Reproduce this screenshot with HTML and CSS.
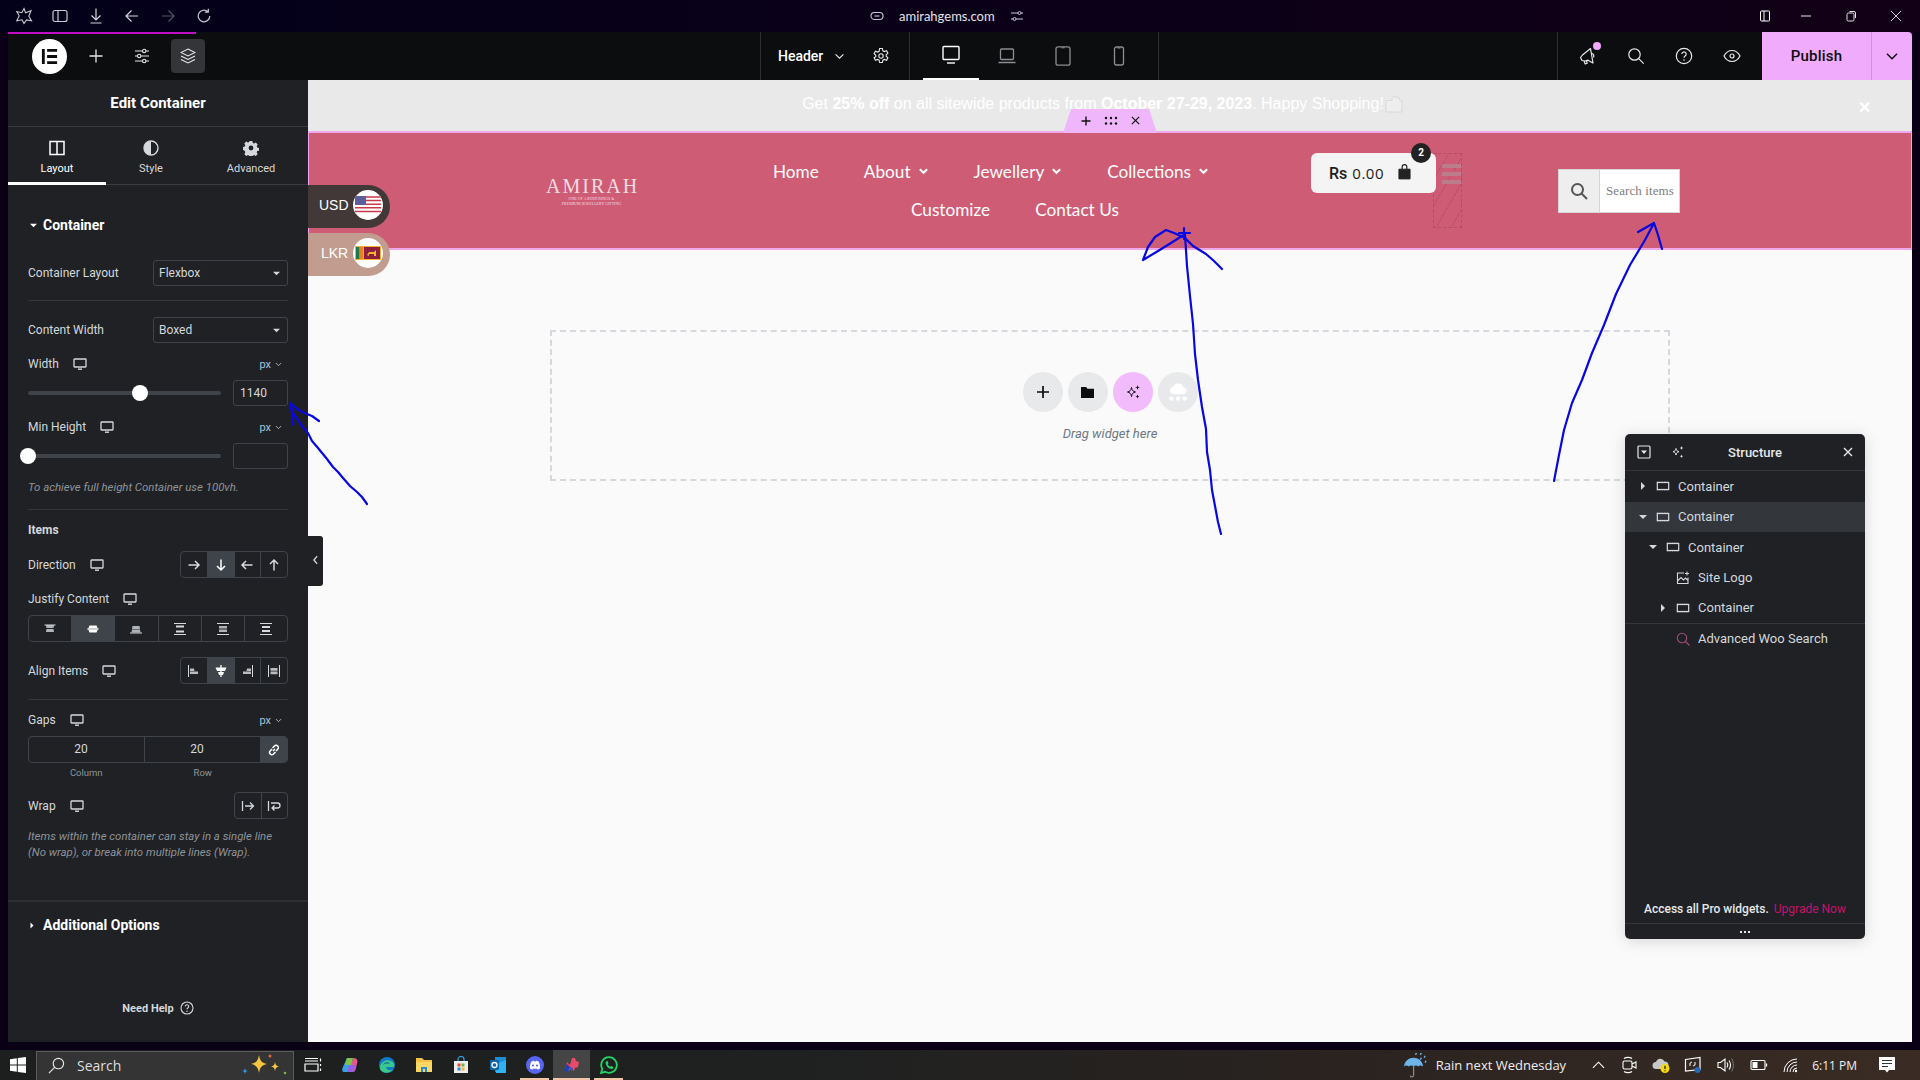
FILE: index.html
```html
<!DOCTYPE html>
<html lang="en">
<head>
  <meta charset="UTF-8" />
  <title>Elementor - Header</title>
  <link rel="stylesheet" href="styles.css">
</head>
<body>
  <svg class="sprites" width="0" height="0" aria-hidden="true">
    <symbol id="i-monitor" viewBox="0 0 14 14"><path d="M1.500 2h11a.5.5 0 0 1 .5.5v7a.5.5 0 0 1-.5.5h-11a.5.5 0 0 1-.5-.5v-7a.5.5 0 0 1 .5-.5z" fill="none" stroke="currentColor" stroke-width="1.300"/><path d="M5 12.200h4" stroke="currentColor" stroke-width="1.400"/></symbol>
    <symbol id="i-box" viewBox="0 0 16 12"><rect x="1.500" y="2" width="13" height="8" fill="none" stroke="currentColor" stroke-width="1.400"/><path d="M1 1.500h14M1 10.500h14" stroke="currentColor" stroke-dasharray="1 1" stroke-width="1"/></symbol>
    <symbol id="i-right" viewBox="0 0 8 10"><path d="M2 1l4 4-4 4z" fill="currentColor"/></symbol>
    <symbol id="i-down" viewBox="0 0 10 8"><path d="M1 2h8L5 6z" fill="currentColor"/></symbol>
    <symbol id="i-chev" viewBox="0 0 12 8"><path d="M1.500 1.500L6 6l4.500-4.500" fill="none" stroke="currentColor" stroke-width="1.300"/></symbol>
  </svg>

  <!-- browser title bar -->
  <header class="browser-bar">
    <div class="browser-left">
      <svg class="b-ico" viewBox="0 0 18 18"><path d="M9 1.500l1.600 4.200 5.400-2-2.200 5.600 2.700 4.400-5-.8L9 16.500l-2-3.700-5.200 1 2.400-5L1.800 4.500l5 1.200z" fill="none" stroke="#c9c9d2" stroke-width="1.100"/></svg>
      <svg class="b-ico" viewBox="0 0 18 18"><rect x="2" y="3.500" width="14" height="11" rx="2" fill="none" stroke="#c9c9d2" stroke-width="1.200"/><path d="M7 3.500v11" stroke="#c9c9d2" stroke-width="1.200"/></svg>
      <svg class="b-ico" viewBox="0 0 18 18"><path d="M9 1.500v11M4.500 8.500L9 13l4.500-4.500M3.500 16h11" fill="none" stroke="#d5d5dc" stroke-width="1.200"/></svg>
      <svg class="b-ico" viewBox="0 0 18 18"><path d="M15 9H3M8.500 3.500L3 9l5.500 5.500" fill="none" stroke="#d5d5dc" stroke-width="1.200"/></svg>
      <svg class="b-ico" viewBox="0 0 18 18"><path d="M3 9h12M9.500 3.500L15 9l-5.500 5.500" fill="none" stroke="#55535f" stroke-width="1.200"/></svg>
      <svg class="b-ico" viewBox="0 0 18 18"><path d="M14.800 9a5.800 5.800 0 1 1-1.900-4.300M13.300 1.800v3.400H9.900" fill="none" stroke="#c9c9d2" stroke-width="1.200"/></svg>
    </div>
    <div class="url">
      <svg class="url-ico" viewBox="0 0 14 14"><rect x="1" y="3.500" width="12" height="7" rx="3.500" fill="none" stroke="#c9c9d2" stroke-width="1.100"/><path d="M4.500 7h5" stroke="#c9c9d2" stroke-width="1.100"/></svg>
      <span>amirahgems.com</span>
      <svg class="url-ico" viewBox="0 0 14 14"><path d="M1 4h7M11 4h2M1 10h2M6 10h7" stroke="#c9c9d2" stroke-width="1.100"/><circle cx="9.500" cy="4" r="1.500" fill="none" stroke="#c9c9d2"/><circle cx="4.500" cy="10" r="1.500" fill="none" stroke="#c9c9d2"/></svg>
    </div>
    <div class="win-btns">
      <svg class="w-ico" viewBox="0 0 12 12"><rect x="1.500" y="1" width="9" height="10" rx="1" fill="none" stroke="#fff"/><path d="M5 1v10" stroke="#fff"/></svg>
      <svg class="w-ico" viewBox="0 0 12 12"><path d="M1 6h10" stroke="#e5e5e5"/></svg>
      <svg class="w-ico" viewBox="0 0 12 12"><rect x="2" y="3" width="7" height="8" rx="1.500" fill="none" stroke="#e5e5e5"/><path d="M4.500 1.500H9a1.500 1.500 0 0 1 1.500 1.500v5" fill="none" stroke="#e5e5e5"/></svg>
      <svg class="w-ico" viewBox="0 0 12 12"><path d="M1 1l10 10M11 1L1 11" stroke="#e5e5e5" stroke-width=".9"/></svg>
    </div>
    <div class="load-line"></div>
  </header>

  <div class="app">
    <!-- elementor top bar -->
    <div class="topbar">
      <div class="tb-left">
        <div class="tb-cell"><div class="el-logo"><svg viewBox="0 0 20 20" width="19" height="19"><path d="M2 2h3v16H2zM7.500 2H18v3H7.500zM7.500 8.500H18v3H7.500zM7.500 15H18v3H7.500z" fill="#0c0d0e"/></svg></div></div>
        <div class="tb-cell"><svg viewBox="0 0 16 16" width="16" height="16"><path d="M8 1.500v13M1.500 8h13" stroke="#e6e8ea" stroke-width="1.300"/></svg></div>
        <div class="tb-cell"><svg viewBox="0 0 16 16" width="16" height="16"><path d="M1 3h7.500M12 3h3M1 8h2.500M7 8h8M1 13h7.500M12 13h3" stroke="#e6e8ea" stroke-width="1.200"/><circle cx="10.200" cy="3" r="1.700" fill="none" stroke="#e6e8ea" stroke-width="1.100"/><circle cx="5.200" cy="8" r="1.700" fill="none" stroke="#e6e8ea" stroke-width="1.100"/><circle cx="10.200" cy="13" r="1.700" fill="none" stroke="#e6e8ea" stroke-width="1.100"/></svg></div>
        <div class="tb-cell"><div class="tb-active"><svg viewBox="0 0 16 16" width="16" height="16"><path d="M8 1L15 4.500 8 8 1 4.500zM1 8l7 3.500L15 8M1 11.500L8 15l7-3.500" fill="none" stroke="#e6e8ea" stroke-width="1.100"/></svg></div></div>
      </div>
      <div class="tb-doc">
        <span class="doc-name">Header</span>
        <svg class="tb-chev" viewBox="0 0 12 8"><use href="#i-chev"/></svg>
        <svg class="tb-gear" viewBox="0 0 18 18"><path d="M7.600 1.500h2.800l.5 2.300 1.500.8 2.200-.8 1.300 2.400-1.700 1.600v1.400l1.700 1.600-1.300 2.400-2.200-.8-1.500.8-.5 2.300H7.600l-.5-2.300-1.500-.8-2.200.8-1.300-2.400L3.800 9.700V8.300L2.100 6.700l1.300-2.400 2.200.8 1.500-.8z" fill="none" stroke="#e6e8ea" stroke-width="1.100"/><circle cx="9" cy="9" r="2.200" fill="none" stroke="#e6e8ea" stroke-width="1.100"/></svg>
      </div>
      <div class="tb-devices">
        <div class="device is-on"><svg viewBox="0 0 20 20" width="20" height="20"><rect x="2" y="1.500" width="16" height="13" rx="1" fill="none" stroke="#fff" stroke-width="1.400"/><path d="M6 18h8" stroke="#fff" stroke-width="1.400"/></svg></div>
        <div class="device"><svg viewBox="0 0 20 20" width="20" height="20"><rect x="3.500" y="3" width="13" height="10.500" rx="1" fill="none" stroke="#8b8e92" stroke-width="1.300"/><path d="M1.500 16.500h17" stroke="#8b8e92" stroke-width="1.500"/></svg></div>
        <div class="device"><svg viewBox="0 0 20 20" width="20" height="20"><rect x="3" y=".8" width="14" height="18.400" rx="2" fill="none" stroke="#8b8e92" stroke-width="1.300"/><path d="M8.500 1.800h3" stroke="#8b8e92"/></svg></div>
        <div class="device"><svg viewBox="0 0 20 20" width="20" height="20"><rect x="5.500" y="1" width="9" height="18" rx="2" fill="none" stroke="#8b8e92" stroke-width="1.300"/><path d="M8.500 2h3" stroke="#8b8e92"/></svg></div>
      </div>
      <div class="tb-tools">
        <span class="tool megaphone"><svg viewBox="0 0 18 18" width="18" height="18"><path d="M11.500 1.500L3.500 8 1.500 10.500l1.500 3 3 .5 3-.8L14 16zM5 14l1.200 3 2-.8L7.500 13.500M13 6.500c1.500.2 2.300 2.300 1.500 4" fill="none" stroke="#e6e8ea" stroke-width="1.200" stroke-linejoin="round"/></svg><i class="dot"></i></span>
        <span class="tool"><svg viewBox="0 0 18 18" width="18" height="18"><circle cx="7.500" cy="7.500" r="5.700" fill="none" stroke="#e6e8ea" stroke-width="1.200"/><path d="M11.700 11.700l5 5" stroke="#e6e8ea" stroke-width="1.200"/></svg></span>
        <span class="tool"><svg viewBox="0 0 18 18" width="18" height="18"><circle cx="9" cy="9" r="7.700" fill="none" stroke="#e6e8ea" stroke-width="1.200"/><path d="M6.800 7a2.200 2.200 0 1 1 3.300 2c-.8.500-1.100.8-1.100 1.800" fill="none" stroke="#e6e8ea" stroke-width="1.200"/><circle cx="9" cy="13" r=".8" fill="#e6e8ea"/></svg></span>
        <span class="tool"><svg viewBox="0 0 18 18" width="18" height="18"><path d="M1 9c2-3.800 4.800-5.500 8-5.500s6 1.700 8 5.500c-2 3.800-4.800 5.500-8 5.500S3 12.800 1 9z" fill="none" stroke="#e6e8ea" stroke-width="1.200"/><circle cx="9" cy="9" r="2" fill="none" stroke="#e6e8ea" stroke-width="1.200"/></svg></span>
      </div>
      <div class="publish">
        <span class="publish-main">Publish</span>
        <span class="publish-more"><svg viewBox="0 0 12 8" width="14" height="9"><use href="#i-chev"/></svg></span>
      </div>
    </div>

    <div class="workspace">
      <!-- settings panel -->
      <aside class="panel">
        <div class="panel-head">Edit Container</div>
        <div class="tabs">
          <div class="tab is-on">
            <svg viewBox="0 0 16 16" width="16" height="16"><rect x="1" y="1.500" width="14" height="13" fill="none" stroke="#fff" stroke-width="1.500"/><path d="M8 1.500v13" stroke="#fff" stroke-width="1.500"/></svg>
            <span>Layout</span>
          </div>
          <div class="tab tab-style">
            <svg viewBox="0 0 16 16" width="16" height="16"><circle cx="8" cy="8" r="7" fill="none" stroke="#d5d8dc" stroke-width="1.400"/><path d="M8 1a7 7 0 0 0 0 14z" fill="#d5d8dc"/></svg>
            <span>Style</span>
          </div>
          <div class="tab tab-adv">
            <svg viewBox="0 0 16 16" width="16" height="16"><path fill-rule="evenodd" d="M6.600 1h2.800l.4 1.900 1.300.6 1.700-1 1.900 2-1 1.700.5 1.300 1.800.4v2.800l-1.800.4-.5 1.300 1 1.700-1.900 2-1.700-1-1.300.6-.4 1.300H6.600l-.4-1.300-1.300-.6-1.700 1-1.900-2 1-1.700-.5-1.300L0 9.700V6.900l1.800-.4.500-1.300-1-1.700 1.900-2 1.700 1 1.300-.6zM8 5.600a2.400 2.400 0 1 0 0 4.800 2.400 2.400 0 0 0 0-4.800z" fill="#d5d8dc"/></svg>
            <span>Advanced</span>
          </div>
        </div>

        <div class="panel-body">
          <div class="sec-title"><svg class="sec-arrow" viewBox="0 0 10 8"><use href="#i-down"/></svg>Container</div>

          <div class="row row-layout"><label>Container Layout</label><div class="select">Flexbox<svg viewBox="0 0 10 8"><use href="#i-down"/></svg></div></div>
          <hr class="sep sep-b">
          <div class="row row-width"><label>Content Width</label><div class="select">Boxed<svg viewBox="0 0 10 8"><use href="#i-down"/></svg></div></div>

          <div class="ctl-head ch-width"><label>Width</label><svg class="mon" viewBox="0 0 14 14"><use href="#i-monitor"/></svg><span class="unit">px<svg viewBox="0 0 12 8"><use href="#i-chev"/></svg></span></div>
          <div class="slider-row"><div class="track"><i class="thumb thumb-w"></i></div><div class="num">1140</div></div>

          <div class="ctl-head ch-min"><label>Min Height</label><svg class="mon" viewBox="0 0 14 14"><use href="#i-monitor"/></svg><span class="unit">px<svg viewBox="0 0 12 8"><use href="#i-chev"/></svg></span></div>
          <div class="slider-row"><div class="track"><i class="thumb thumb-h"></i></div><div class="num"></div></div>
          <p class="hint hint-vh">To achieve full height Container use 100vh.</p>
          <hr class="sep sep-b">

          <div class="sub-title">Items</div>

          <div class="row row-dir">
            <div class="ctl-label"><label>Direction</label><svg class="mon" viewBox="0 0 14 14"><use href="#i-monitor"/></svg></div>
            <div class="btn-group g4">
              <span><svg viewBox="0 0 14 14"><path d="M1.500 7h10.500M8 3l4 4-4 4" fill="none" stroke="currentColor" stroke-width="1.500"/></svg></span>
              <span class="is-on"><svg viewBox="0 0 14 14"><path d="M7 1.500V12M3 8l4 4 4-4" fill="none" stroke="currentColor" stroke-width="1.500"/></svg></span>
              <span><svg viewBox="0 0 14 14"><path d="M12.500 7H2M6 3L2 7l4 4" fill="none" stroke="currentColor" stroke-width="1.500"/></svg></span>
              <span><svg viewBox="0 0 14 14"><path d="M7 12.500V2M3 6l4-4 4 4" fill="none" stroke="currentColor" stroke-width="1.500"/></svg></span>
            </div>
          </div>

          <div class="ctl-head ch-just"><label>Justify Content</label><svg class="mon" viewBox="0 0 14 14"><use href="#i-monitor"/></svg></div>
          <div class="btn-group g6">
            <span><svg viewBox="0 0 14 14"><path d="M1.500 3h11" stroke="currentColor"/><path d="M3 3h8l-.5 3h-7zM3.500 7h7l.5 3H3z" fill="currentColor" opacity=".8"/></svg></span>
            <span class="is-on"><svg viewBox="0 0 14 14"><path d="M1.500 7h11" stroke="currentColor" stroke-width="1.300"/><path d="M3.500 3.500h7L11.500 6h-9zM2.500 8h9l-1 2.500h-7z" fill="currentColor"/></svg></span>
            <span><svg viewBox="0 0 14 14"><path d="M1 11h12" stroke="currentColor"/><path d="M3.500 4h7l.5 3H3zM3 7.500h8l.5 3h-9z" fill="currentColor" opacity=".8"/></svg></span>
            <span><svg viewBox="0 0 14 14"><path d="M1 1.500h12M1 12.500h12" stroke="currentColor"/><path d="M3 3.500h8v2H3zM3 8.500h8v2H3z" fill="currentColor"/></svg></span>
            <span><svg viewBox="0 0 14 14"><path d="M1 1.500h12M1 12.500h12" stroke="currentColor"/><path d="M3 4h8v2.500H3zM3 7.500h8V10H3z" fill="currentColor" opacity=".8"/></svg></span>
            <span><svg viewBox="0 0 14 14"><path d="M1 1.500h12M1 12.500h12" stroke="currentColor"/><path d="M3 4h8v2H3zM3 8h8v2H3z" fill="currentColor"/></svg></span>
          </div>

          <div class="row row-align">
            <div class="ctl-label"><label>Align Items</label><svg class="mon" viewBox="0 0 14 14"><use href="#i-monitor"/></svg></div>
            <div class="btn-group g4">
              <span><svg viewBox="0 0 14 14"><path d="M1.500 1v12" stroke="currentColor"/><path d="M3 4.500h4l.5 2.500H3zM3 7.500h8V10H3z" fill="currentColor" opacity=".85"/></svg></span>
              <span class="is-on"><svg viewBox="0 0 14 14"><path d="M7 1v12" stroke="currentColor" stroke-width="1.300"/><path d="M1.500 3.500h11L11 7H3zM4 8h6l-1 3H5z" fill="currentColor"/></svg></span>
              <span><svg viewBox="0 0 14 14"><path d="M12.500 1v12" stroke="currentColor"/><path d="M7 4.500h4V7H6.500zM3 7.500h8V10H3z" fill="currentColor" opacity=".85"/></svg></span>
              <span><svg viewBox="0 0 14 14"><path d="M1.500 1v12M12.500 1v12" stroke="currentColor"/><path d="M3.500 4h7v2.700h-7zM3.500 7.500h7v2.700h-7z" fill="currentColor" opacity=".85"/></svg></span>
            </div>
          </div>
          <hr class="sep sep-a">

          <div class="ctl-head ch-gaps"><label>Gaps</label><svg class="mon" viewBox="0 0 14 14"><use href="#i-monitor"/></svg><span class="unit">px<svg viewBox="0 0 12 8"><use href="#i-chev"/></svg></span></div>
          <div class="gap-fields">
            <span>20</span><span>20</span>
            <i class="gap-link"><svg viewBox="0 0 14 14" width="14" height="14"><path d="M6 8l2-2M5.500 5L7.500 3a2.100 2.100 0 0 1 3.200 3.200L9 8M8.500 9l-2 2a2.100 2.100 0 0 1-3.200-3.200L5 6" fill="none" stroke="#fff" stroke-width="1.500"/></svg></i>
          </div>
          <div class="gap-labels"><span>Column</span><span>Row</span></div>

          <div class="row row-wrap">
            <div class="ctl-label"><label>Wrap</label><svg class="mon" viewBox="0 0 14 14"><use href="#i-monitor"/></svg></div>
            <div class="btn-group g2">
              <span><svg viewBox="0 0 14 14"><path d="M1.500 2v10M4 7h8.500M9 3.500L12.500 7 9 10.500" fill="none" stroke="currentColor" stroke-width="1.300"/></svg></span>
              <span><svg viewBox="0 0 14 14"><path d="M1.500 2v10M4 4h6.500a2.500 2.500 0 0 1 0 5H5M7.500 6.500L5 9l2.500 2.500" fill="none" stroke="currentColor" stroke-width="1.300"/></svg></span>
            </div>
          </div>
          <p class="hint hint-wrap">Items within the container can stay in a single line<br>(No wrap), or break into multiple lines (Wrap).</p>
        </div>

        <div class="panel-extra">
          <div class="sec-title"><svg class="sec-arrow small" viewBox="0 0 8 10"><use href="#i-right"/></svg>Additional Options</div>
        </div>
        <div class="need-help">Need Help<svg viewBox="0 0 14 14" width="14" height="14"><circle cx="7" cy="7" r="6" fill="none" stroke="#d5d8dc" stroke-width="1.100"/><path d="M5.300 5.500a1.700 1.700 0 1 1 2.500 1.500c-.6.400-.8.600-.8 1.300" fill="none" stroke="#d5d8dc" stroke-width="1.100"/><circle cx="7" cy="10.200" r=".7" fill="#d5d8dc"/></svg></div>
      </aside>

      <!-- page preview -->
      <main class="preview">
        <div class="promo">
          <p>Get <b>25% off</b> on all sitewide products from <b>October 27-29, 2023</b>. Happy Shopping!<svg class="promo-bag" viewBox="0 0 18 18" width="18" height="18"><path d="M1 5.500h6V3l2-2 2 2 2-1 2 3.500h2V17H1z" fill="#eeeeee" stroke="#d9d9d9"/></svg></p>
          <span class="promo-close">&#10005;</span>
        </div>
        <div class="handle">
          <svg viewBox="0 0 12 12" width="12" height="12"><path d="M6 1.500v9M1.500 6h9" stroke="#111" stroke-width="1.400"/></svg>
          <svg viewBox="0 0 14 12" width="14" height="12"><g fill="#111"><circle cx="2" cy="3" r="1.200"/><circle cx="7" cy="3" r="1.200"/><circle cx="12" cy="3" r="1.200"/><circle cx="2" cy="8.500" r="1.200"/><circle cx="7" cy="8.500" r="1.200"/><circle cx="12" cy="8.500" r="1.200"/></g></svg>
          <svg viewBox="0 0 12 12" width="11" height="11"><path d="M2 2l8 8M10 2l-8 8" stroke="#111" stroke-width="1.300"/></svg>
        </div>
        <div class="site-header">
          <div class="site-logo">
            <div class="logo-word">AMIRAH</div>
            <div class="logo-sub">ONE OF A KIND RINGS &amp;<br>PREMIUM JEWELLERY GIFTING</div>
          </div>
          <nav class="site-nav">
            <div class="nav-row nav-a">
              <a>Home</a>
              <a>About<svg viewBox="0 0 12 8"><path d="M2 2l4 4 4-4" fill="none" stroke="#fff" stroke-width="2.200"/></svg></a>
              <a>Jewellery<svg viewBox="0 0 12 8"><path d="M2 2l4 4 4-4" fill="none" stroke="#fff" stroke-width="2.200"/></svg></a>
              <a>Collections<svg viewBox="0 0 12 8"><path d="M2 2l4 4 4-4" fill="none" stroke="#fff" stroke-width="2.200"/></svg></a>
            </div>
            <div class="nav-row nav-b"><a>Customize</a><a>Contact Us</a></div>
          </nav>
          <div class="cart">
            <b>Rs</b><span>0.00</span>
            <svg viewBox="0 0 14 18" width="13" height="17"><path d="M1 6.500h12V17H1z" fill="#222" stroke="#222" stroke-linejoin="round"/><path d="M4.500 6.500V4a2.500 2.500 0 0 1 5 0v2.500" fill="none" stroke="#222" stroke-width="1.300"/></svg>
            <i class="cart-badge">2</i>
          </div>
          <div class="menu-stub"><i></i><i></i><i></i></div>
          <div class="site-search">
            <span class="search-ico"><svg viewBox="0 0 18 18" width="18" height="18"><circle cx="7.500" cy="7.500" r="5.500" fill="none" stroke="#555" stroke-width="2"/><path d="M11.500 11.500l5.500 5.500" stroke="#555" stroke-width="2"/></svg></span>
            <span class="search-text">Search items</span>
          </div>
        </div>

        <div class="currency">
          <div class="cur cur-usd">USD
            <span class="flag"><svg viewBox="0 0 26 18" width="26" height="18"><rect width="26" height="18" fill="#fff"/><path d="M0 1h26M0 4.600h26M0 8.200h26M0 11.800h26M0 15.400h26" stroke="#c8394a" stroke-width="1.500"/><rect width="11" height="9" fill="#5a5f9c"/></svg></span>
          </div>
          <div class="cur cur-lkr">LKR
            <span class="flag"><svg viewBox="0 0 26 14" width="26" height="14"><rect width="26" height="14" fill="#f2b233"/><rect x="1" y="1" width="3.500" height="12" fill="#1c7a4e"/><rect x="4.500" y="1" width="3.500" height="12" fill="#ef7d1a"/><rect x="9" y="1" width="16" height="12" fill="#8d1f3c"/><path d="M12 9l2-3h5l2-2v6h-2V8h-5v2z" fill="#f2b233"/></svg></span>
          </div>
        </div>

        <section class="dropzone">
          <div class="drop-btns">
            <span class="drop-btn"><svg viewBox="0 0 14 14" width="14" height="14"><path d="M7 1v12M1 7h12" stroke="#0c0d0e" stroke-width="1.700"/></svg></span>
            <span class="drop-btn"><svg viewBox="0 0 16 14" width="15" height="13"><path d="M1 1h5.500l1.500 2h7v10H1z" fill="#0c0d0e"/></svg></span>
            <span class="drop-btn is-ai"><svg viewBox="0 0 16 16" width="16" height="16"><path d="M6.500 3.500c.6 3 1.500 3.900 4 4.500-2.500.6-3.400 1.500-4 4.500-.6-3-1.500-3.900-4-4.500 2.500-.6 3.400-1.500 4-4.500z" fill="none" stroke="#0c0d0e"/><path d="M12.500 1l.6 1.900 1.900.6-1.900.6-.6 1.900-.6-1.900-1.900-.6 1.900-.6zM12.500 10.500l.6 1.400 1.400.6-1.400.6-.6 1.400-.6-1.400-1.400-.6 1.400-.6z" fill="#0c0d0e"/></svg></span>
            <span class="drop-btn"><svg viewBox="0 0 20 20" width="22" height="22"><path d="M5.500 12a3.300 3.300 0 0 1 0-6.500A5 5 0 0 1 15 6a3 3 0 0 1-.5 6z" fill="#fff"/><circle cx="4" cy="16" r="2" fill="#fff"/><circle cx="10" cy="16" r="2" fill="#fff"/><circle cx="16" cy="16" r="2" fill="#fff"/></svg></span>
          </div>
          <p>Drag widget here</p>
        </section>

        <!-- navigator -->
        <div class="structure">
          <div class="st-head">
            <svg viewBox="0 0 14 14" width="14" height="14"><rect x="1" y="1" width="12" height="12" rx="1" fill="none" stroke="#e6e8ea" stroke-width="1.200"/><path d="M4 5.500h6L7 9z" fill="#e6e8ea"/></svg>
            <svg class="st-spark" viewBox="0 0 14 14" width="14" height="14"><path d="M5 3.500c.4 2 1 2.700 3 3.200-2 .5-2.600 1.200-3 3.300-.4-2.100-1-2.800-3-3.300 2-.5 2.600-1.200 3-3.200z" fill="none" stroke="#e6e8ea"/><path d="M10.500 1l.5 1.500 1.500.5-1.500.5-.5 1.500L10 3.500 8.500 3l1.500-.5zM10.500 9.500l.5 1.200 1.200.5-1.200.5-.5 1.300-.5-1.300-1.200-.5 1.200-.5z" fill="#e6e8ea"/></svg>
            <span class="st-title">Structure</span>
            <svg class="st-close" viewBox="0 0 10 10" width="10" height="10"><path d="M1 1l8 8M9 1L1 9" stroke="#e6e8ea" stroke-width="1.400"/></svg>
          </div>
          <div class="st-row d0"><svg class="tw" viewBox="0 0 8 10"><use href="#i-right"/></svg><svg class="bx" viewBox="0 0 16 12"><use href="#i-box"/></svg>Container</div>
          <div class="st-row d0 is-sel"><svg class="tw" viewBox="0 0 10 8"><use href="#i-down"/></svg><svg class="bx" viewBox="0 0 16 12"><use href="#i-box"/></svg>Container</div>
          <div class="st-row d1"><svg class="tw" viewBox="0 0 10 8"><use href="#i-down"/></svg><svg class="bx" viewBox="0 0 16 12"><use href="#i-box"/></svg>Container</div>
          <div class="st-row d2 leaf"><svg class="bx" viewBox="0 0 14 14"><path d="M8 2H1.500v10.500H12V6.500M1.500 10L5 6.500l2.500 2.500L9.500 7l2.500 2.500" fill="none" stroke="currentColor" stroke-width="1.100"/><path d="M11 .5v4M9 2.500h4" stroke="currentColor"/></svg>Site Logo</div>
          <div class="st-row d2 st-last"><svg class="tw" viewBox="0 0 8 10"><use href="#i-right"/></svg><svg class="bx" viewBox="0 0 16 12"><use href="#i-box"/></svg>Container</div>
          <div class="st-row d2 leaf st-woo"><svg class="bx" viewBox="0 0 14 14"><circle cx="6" cy="6" r="4.700" fill="none" stroke="#a04d7c" stroke-width="1.100"/><path d="M9.500 9.500l4 4" stroke="#a04d7c" stroke-width="1.100"/></svg>Advanced Woo Search</div>
          <div class="st-foot">
            <div class="st-promo">Access all Pro widgets. <a>Upgrade Now</a></div>
            <div class="st-dots"><i></i><i></i><i></i></div>
          </div>
        </div>

        <div class="collapse"><svg viewBox="0 0 8 12" width="7" height="10"><path d="M6 1.500L2 6l4 4.500" fill="none" stroke="#d5d8dc" stroke-width="1.500"/></svg></div>

        <!-- pen marks -->
        <svg class="ink" viewBox="308 80 1604 962" width="1604" height="962">
          <g fill="none" stroke="#0808e0" stroke-width="2.200" stroke-linejoin="round" stroke-linecap="round">
            <path d="M367 504L362 497 357 492 350 486 343 478 338 472 333 467 327 459 318 448 312 441 308 433 302 426 293 413 290 403"/>
            <path d="M293 425L292 413 290 403 296 408 302 412 312 416 319 421"/>
            <path d="M1221 534L1218 522 1215 506 1212 490 1210 470 1207 452 1206 429 1202 407 1198 380 1195 354 1193 324 1190 296 1187 266 1185 235"/>
            <path d="M1143 260L1148 247 1155 237 1166 230 1174 233 1185 238 1193 246 1206 254 1214 261 1222 269M1143 260L1158 251 1171 243 1185 234M1184 228V239M1179 233H1190"/>
            <path d="M1554 481L1559 455 1564 430 1572 403 1582 380 1592 353 1604 325 1616 294 1630 265 1645 240 1654 223 1658 235 1662 249M1638 232L1654 223"/>
          </g>
        </svg>
      </main>
    </div>
  </div>

  <!-- windows taskbar -->
  <footer class="taskbar">
    <svg class="start" viewBox="0 0 16 16" width="16" height="16"><path d="M0 2.200L6.800 1.200v6.300H0zM7.800 1.100L16 0v7.500H7.800zM0 8.500h6.800v6.300L0 13.800zM7.800 8.500H16V16l-8.200-1.100z" fill="#fff"/></svg>
    <div class="tb-search">
      <svg viewBox="0 0 18 18" width="17" height="17"><circle cx="11" cy="7" r="5.500" fill="none" stroke="#e8e8e8" stroke-width="1.200"/><path d="M7 11l-6 6" stroke="#e8e8e8" stroke-width="1.200"/></svg>
      <span>Search</span>
      <svg class="sparkle" viewBox="0 0 46 26" width="46" height="26"><path d="M18 2c1 6 3 8 8 9-5 1-7 3-8 9-1-6-3-8-8-9 5-1 7-3 8-9z" fill="#f7c63e"/><path d="M34 9c.5 3 1.500 4 4 4.500-2.500.5-3.500 1.500-4 4.500-.5-3-1.500-4-4-4.500 2.500-.5 3.500-1.500 4-4.500z" fill="#f7c63e"/><path d="M4 15c.4 2 1 2.700 3 3-2 .4-2.600 1-3 3-.4-2-1-2.600-3-3 2-.3 2.600-1 3-3z" fill="#2f9be6"/><circle cx="29" cy="3" r="1.500" fill="#e0683c"/><circle cx="44" cy="20" r="1.300" fill="#7fb23e"/></svg>
    </div>
    <div class="task-apps">
      <span class="app-ico"><svg viewBox="0 0 18 18" width="18" height="18"><path d="M1 2.500h13M1 5h13M1 8h13v7H1zM16.500 2.500v3M16.500 8v2M16.500 12.500v2.500" fill="none" stroke="#fff" stroke-width="1.200"/></svg></span>
      <span class="app-ico"><svg viewBox="0 0 18 18" width="18" height="18"><path d="M6 2h5l-3 14H3C1 16 1 14 1.500 12z" fill="#36a3e8"/><path d="M12 2c3 0 4.500 1 4.500 3.500L15 12c-.5 3-2 4-4 4H8z" fill="#e8568f"/><path d="M6 2h6l-1.500 7H4z" fill="#7fc34a"/><path d="M8 9h6.500L13 16H6z" fill="#9a5fe0"/></svg></span>
      <span class="app-ico"><svg viewBox="0 0 18 18" width="18" height="18"><circle cx="9" cy="9" r="8" fill="#1279c9"/><path d="M2 11C3 5 9 3 13 5c3 1.500 4 4 3 6H8c0 3 4 4 7 2.500-2 3-7 4-10 2.500C2.500 15 1.500 13 2 11z" fill="#3ac98a"/><path d="M5 9.500C6 6 10 5.500 12 7.500H7.500C6.500 7.500 5.500 8.500 5 9.500z" fill="#0c5aa6"/></svg></span>
      <span class="app-ico"><svg viewBox="0 0 18 18" width="18" height="18"><path d="M1 2h6l2 2h8v12H1z" fill="#f5c242"/><path d="M1 6h16v10H1z" fill="#fbd864"/><path d="M6 16v-5h6v5h-2v-3H8v3z" fill="#2a8ad4"/></svg></span>
      <span class="app-ico"><svg viewBox="0 0 18 18" width="18" height="18"><path d="M2 5h14v12H2z" fill="#eee"/><path d="M6 5V3.500a3 3 0 0 1 6 0V5" fill="none" stroke="#33a0e0" stroke-width="1.200"/><path d="M5.500 7.500h3v3h-3z" fill="#e2492f"/><path d="M9.500 7.500h3v3h-3z" fill="#6eb43f"/><path d="M5.500 11.500h3v3h-3z" fill="#2a8ad4"/><path d="M9.500 11.500h3v3h-3z" fill="#f5b52e"/></svg></span>
      <span class="app-ico"><svg viewBox="0 0 18 18" width="18" height="18"><path d="M6 1h11v15H6z" fill="#1b8fd6"/><path d="M7 8l10-4v13H7z" fill="#30b2ee"/><rect x="1" y="4" width="9" height="10" rx="1" fill="#0a64b0"/><circle cx="5.500" cy="9" r="2.500" fill="none" stroke="#fff" stroke-width="1.300"/></svg></span>
      <span class="app-ico is-run"><svg viewBox="0 0 18 18" width="18" height="18"><circle cx="9" cy="9" r="9" fill="#5865f2"/><path d="M4 12.500c-.3-3 .5-5.500 1.500-7 1-.5 2-.7 2.500-.7l.3.6h1.400l.3-.6c.5 0 1.500.2 2.500.7 1 1.500 1.800 4 1.500 7-1 .7-2 1-2.700 1l-.6-1c-1.200.4-2.200.4-3.400 0l-.6 1c-.7 0-1.700-.3-2.700-1z" fill="#fff"/><circle cx="7" cy="9.500" r="1.100" fill="#5865f2"/><circle cx="11" cy="9.500" r="1.100" fill="#5865f2"/></svg></span>
      <span class="app-ico is-run is-cur"><svg viewBox="0 0 18 18" width="18" height="18"><path d="M2 14l2-8 3 3 2-7 3 0 1 3 3 1-1 5-3 1-1 3-3-3-2 3z" fill="#e84a6a"/><path d="M1 15l3-7 3 3-2 5z" fill="#1d3fb8"/><path d="M7 11l3 1-2 4z" fill="#2a58d0"/></svg></span>
      <span class="app-ico is-run"><svg viewBox="0 0 18 18" width="18" height="18"><path d="M9 1.200a7.800 7.800 0 0 0-6.700 11.700L1 17l4.200-1.200A7.800 7.800 0 1 0 9 1.200z" fill="none" stroke="#25d366" stroke-width="1.800"/><path d="M6 5.500l1.500-.5 1 2.200-.8 1c.5 1 1.500 2 2.600 2.500l1-.8 2 1-.5 1.500c-1 1-3.500.5-5.200-1.200S5 6.500 6 5.500z" fill="#25d366"/></svg></span>
    </div>
    <div class="tray">
      <svg class="umbrella" viewBox="0 0 26 28" width="25" height="27"><path d="M1 15C2 9 6 6 11 6s9 3 10 9c-2-1.500-4-1.500-5 0-1.500-1.500-3.500-1.500-5 0-1.500-1.500-3.500-1.500-5 0-1.500-1.500-3.500-1.500-5 0z" fill="#6cb4ea"/><path d="M11 14v10c0 2.500-3 2.500-3.500.5" fill="none" stroke="#8a8a8a" stroke-width="1.300"/><path d="M14 1l-1 2M19 1l-1 2M23 4l-1 2M19 6l-1 2M24 9l-1 2" stroke="#6cb4ea" stroke-width="1.400"/></svg>
      <span class="weather">Rain next Wednesday</span>
      <svg class="t-chev" viewBox="0 0 14 8" width="13" height="8"><path d="M1 7l6-6 6 6" fill="none" stroke="#fff" stroke-width="1.200"/></svg>
      <svg class="t-ico t-cam" viewBox="0 0 16 18" width="16" height="18"><rect x="1" y="5" width="9" height="8" rx="1.500" fill="none" stroke="#fff" stroke-width="1.100"/><path d="M10 8l4-2v6l-4-2M2 2.500C4 1 8 1 10 2.500M2 15.500c2 1.500 6 1.500 8 0" fill="none" stroke="#fff" stroke-width="1.100"/></svg>
      <svg class="t-ico t-cloud" viewBox="0 0 18 18" width="18" height="18"><path d="M4 13a3.500 3.500 0 0 1 0-7 4.500 4.500 0 0 1 8.500-.5A3.500 3.500 0 0 1 13 13z" fill="#c8c8c8"/><circle cx="13" cy="12.500" r="4.500" fill="#f6d90b"/><path d="M13 9.800v3.200M13 14.200v1" stroke="#222" stroke-width="1.300"/></svg>
      <svg class="t-ico t-disp" viewBox="0 0 18 18" width="18" height="18"><path d="M1.500 3.500L16 1.500v12l-14.500 1.500z" fill="none" stroke="#fff" stroke-width="1.200"/><path d="M6 10V7l2-1M11 6v3l-2 1" fill="none" stroke="#fff"/><circle cx="13.500" cy="14" r="3" fill="#2468b8"/></svg>
      <svg class="t-ico t-vol" viewBox="0 0 18 18" width="18" height="18"><path d="M2 6.500h2.500L9 3v12l-4.500-3.500H2z" fill="none" stroke="#fff" stroke-width="1.100"/><path d="M11 6.500c1 1.500 1 3.500 0 5M13 4.500c2 2.500 2 6.500 0 9" fill="none" stroke="#fff" stroke-width="1.100"/><path d="M15.500 2.500c2.500 3.500 2.500 9.500 0 13" fill="none" stroke="#777"/></svg>
      <svg class="t-ico t-bat" viewBox="0 0 18 12" width="18" height="12"><rect x="1" y="1.500" width="14" height="9" rx="1" fill="none" stroke="#fff" stroke-width="1.100"/><rect x="2.500" y="3" width="5" height="6" fill="#fff"/><path d="M16.500 4.500v3" stroke="#fff" stroke-width="1.300"/></svg>
      <svg class="t-ico t-wifi" viewBox="0 0 18 18" width="18" height="18"><path d="M2 16A13 13 0 0 1 15 3M5 16A10 10 0 0 1 15 6M8 16a7 7 0 0 1 7-7M11 16a4 4 0 0 1 4-4" fill="none" stroke="#fff" stroke-width="1"/><circle cx="14" cy="15" r="1.200" fill="#fff"/></svg>
      <span class="clock">6:11 PM</span>
      <svg class="t-note" viewBox="0 0 18 18" width="18" height="18"><path d="M1 1h16v13h-6l-2 2.500L7 14H1z" fill="#fff"/><path d="M4 4.500h10M4 7.500h10M4 10.500h6" stroke="#333" stroke-width="1"/></svg>
    </div>
  </footer>
</body>
</html>
```

FILE: styles.css
```css
/* base */
* {
  box-sizing: border-box;
}
html,
body {
  margin: 0;
  height: 100%;
}
body {
  display: flex;
  flex-direction: column;
  height: 1080px;
  overflow: hidden;
  background-color: #0a0016;
  font-family: Roboto, Arial, sans-serif;
  color: #d5d8dc;
}
.sprites {
  position: absolute;
}
p {
  margin: 0;
}

/* browser bar */
.browser-bar {
  position: relative;
  display: flex;
  align-items: center;
  height: 32px;
  flex: none;
  background: linear-gradient(90deg, #03001a, #0a0018 50%, #120016);
}
.browser-left {
  display: flex;
  gap: 18px;
  padding-left: 15px;
}
.b-ico {
  width: 18px;
  height: 18px;
}
.url {
  position: absolute;
  left: 870px;
  top: 0;
  display: flex;
  align-items: center;
  gap: 15px;
  height: 32px;
  font-size: 13px;
  color: #e4e4e8;
  font-family: Lato, sans-serif;
}
.url-ico {
  width: 14px;
  height: 14px;
}
.win-btns {
  display: flex;
  gap: 30px;
  margin-left: auto;
  padding-right: 18px;
}
.w-ico {
  width: 12px;
  height: 12px;
  margin-left: 3px;
}
.w-ico:first-child {
  margin-right: -4px;
}
.load-line {
  position: absolute;
  left: 8px;
  bottom: -2px;
  width: 188px;
  height: 2px;
  background-color: #c20fc4;
  z-index: 5;
}

/* app shell */
.app {
  display: flex;
  flex-direction: column;
  height: 1010px;
  margin: 0 8px;
  flex: none;
}
.topbar {
  display: flex;
  height: 48px;
  background-color: #0c0d0e;
  border-top-right-radius: 4px;
  flex: none;
}
.tb-left {
  display: flex;
  align-items: center;
  width: 752px;
  padding-left: 18px;
}
.tb-cell {
  display: flex;
  align-items: center;
  justify-content: center;
  width: 46.4px;
  height: 48px;
}
.el-logo {
  display: flex;
  align-items: center;
  justify-content: center;
  width: 35px;
  height: 35px;
  border-radius: 50%;
  background-color: #fff;
}
.tb-active {
  display: flex;
  align-items: center;
  justify-content: center;
  width: 34px;
  height: 34px;
  border-radius: 4px;
  background-color: #333538;
}
.tb-doc {
  display: flex;
  align-items: center;
  width: 150px;
  padding-left: 17px;
  border-left: 1px solid #2d2f32;
  border-right: 1px solid #2d2f32;
}
.doc-name {
  font-size: 14px;
  font-weight: 500;
  color: #fff;
}
.tb-chev {
  width: 11px;
  height: 7px;
  margin-left: 11px;
  color: #e6e8ea;
}
.tb-gear {
  width: 18px;
  height: 18px;
  margin-left: 27px;
}
.tb-devices {
  display: flex;
  width: 249px;
  padding-left: 13px;
  border-right: 1px solid #2d2f32;
}
.device {
  display: flex;
  align-items: center;
  justify-content: center;
  width: 56px;
  height: 48px;
}
.device.is-on {
  border-bottom: 2px solid #fff;
}
.tb-tools {
  display: flex;
  align-items: center;
  width: 205px;
  margin-left: auto;
  padding-left: 6px;
  border-left: 1px solid #2d2f32;
}
.tool {
  position: relative;
  display: flex;
  justify-content: center;
  width: 48px;
}
.dot {
  position: absolute;
  left: 29px;
  top: -5px;
  width: 8px;
  height: 8px;
  border-radius: 50%;
  background-color: #f0abfc;
}
.publish {
  display: flex;
  width: 150px;
  height: 48px;
  color: #0c0d0e;
  background-color: #f0abfc;
  border-top-right-radius: 4px;
}
.publish-main {
  width: 109px;
  line-height: 48px;
  text-align: center;
  font-size: 15px;
  font-weight: 500;
  letter-spacing: 0.2px;
}
.publish-more {
  display: flex;
  align-items: center;
  justify-content: center;
  width: 41px;
  border-left: 1px solid #d98ce6;
}
.workspace {
  position: relative;
  display: flex;
  flex: 1;
  min-height: 0;
}

/* settings panel */
.panel {
  display: flex;
  flex-direction: column;
  width: 300px;
  flex: none;
  background-color: #1f2124;
  font-size: 12px;
}
.panel-head {
  height: 47px;
  line-height: 47px;
  text-align: center;
  font-size: 15px;
  font-weight: 700;
  color: #fff;
  border-bottom: 1px solid #3a3c40;
}
.tabs {
  display: flex;
  height: 58px;
  border-bottom: 1px solid #3a3c40;
}
.tab {
  display: flex;
  flex-direction: column;
  align-items: center;
  gap: 6px;
  width: 98px;
  padding-top: 13px;
  font-size: 11px;
  color: #d5d8dc;
}
.tab-style {
  width: 90px;
}
.tab-adv {
  width: 112px;
  padding-right: 2px;
}
.tab.is-on {
  color: #fff;
  border-bottom: 3px solid #fff;
  margin-bottom: -1px;
}
.panel-body {
  padding: 20px 20px 0;
}
.sec-title {
  display: flex;
  align-items: center;
  height: 16px;
  margin-top: 12px;
  font-size: 14px;
  font-weight: 700;
  color: #fff;
}
.sec-arrow {
  width: 9px;
  height: 7px;
  margin-right: 5px;
  margin-left: 1px;
  color: #fff;
}
.sec-arrow.small {
  width: 6px;
  height: 9px;
  margin-left: 1px;
  margin-right: 8px;
}
.row {
  display: flex;
  align-items: center;
  justify-content: space-between;
}
.row label,
.ctl-head label,
.ctl-label label {
  color: #d5d8dc;
}
.row-layout {
  margin-top: 27px;
}
.row-width {
  margin-top: 16px;
}
.select {
  position: relative;
  width: 135px;
  height: 26px;
  padding-left: 5px;
  line-height: 24px;
  border: 1px solid #3f444b;
  border-radius: 3px;
  color: #d5d8dc;
}
.select svg {
  position: absolute;
  right: 6px;
  top: 9px;
  width: 9px;
  height: 7px;
}
.sep {
  height: 1px;
  margin: 15px 0 0;
  border: 0;
  background-color: #33363b;
}
.sep-b {
  margin-top: 14px;
}
.ctl-head {
  display: flex;
  align-items: center;
  height: 16px;
}
.ch-width {
  margin-top: 13px;
}
.ch-min {
  margin-top: 13px;
}
.ch-just {
  margin-top: 13px;
  margin-bottom: 8px;
}
.ch-gaps {
  margin-top: 12px;
  margin-bottom: 8px;
}
.mon {
  width: 14px;
  height: 14px;
  margin-left: 14px;
  color: #d5d8dc;
}
.unit {
  display: flex;
  align-items: center;
  gap: 4px;
  margin-left: auto;
  padding-right: 6px;
  font-size: 11px;
  color: #a5c4dc;
}
.unit svg {
  width: 7px;
  height: 5px;
  color: #d5d8dc;
}
.slider-row {
  display: flex;
  align-items: center;
  justify-content: space-between;
  height: 26px;
  margin-top: 8px;
}
.track {
  position: relative;
  width: 193px;
  height: 4px;
  border-radius: 2px;
  background-color: #3f444b;
}
.thumb {
  position: absolute;
  top: -6px;
  width: 16px;
  height: 16px;
  border-radius: 50%;
  background-color: #fff;
}
.thumb-w {
  left: 104px;
}
.thumb-h {
  left: -8px;
}
.num {
  width: 55px;
  height: 26px;
  padding-left: 6px;
  line-height: 24px;
  border: 1px solid #3f444b;
  border-radius: 3px;
}
.hint {
  font-size: 11.4px;
  line-height: 16px;
  font-style: italic;
  color: #8f949a;
  white-space: nowrap;
}
.hint-vh {
  margin-top: 10px;
}
.hint-wrap {
  margin-top: 9px;
}
.sub-title {
  height: 16px;
  margin-top: 12px;
  line-height: 16px;
  font-weight: 700;
  color: #d5d8dc;
}
.row-dir {
  margin-top: 13px;
}
.row-align {
  margin-top: 15px;
}
.row-wrap {
  margin-top: 13px;
}
.ctl-label {
  display: flex;
  align-items: center;
}
.btn-group {
  display: flex;
  height: 27px;
  border: 1px solid #3f444b;
  border-radius: 4px;
  overflow: hidden;
}
.btn-group span {
  display: flex;
  flex: 1;
  align-items: center;
  justify-content: center;
  border-left: 1px solid #3f444b;
  color: #d5d8dc;
}
.btn-group span:first-child {
  border-left: 0;
}
.btn-group span.is-on {
  background-color: #3f444b;
  color: #fff;
}
.btn-group svg {
  width: 14px;
  height: 14px;
}
.g4 {
  width: 108px;
}
.g6 {
  width: 260px;
}
.g2 {
  width: 54px;
}
.gap-fields {
  position: relative;
  display: flex;
  width: 260px;
  height: 27px;
  padding-right: 27px;
  border: 1px solid #3f444b;
  border-radius: 4px;
  overflow: hidden;
}
.gap-fields span {
  flex: 1;
  line-height: 25px;
  text-align: center;
  padding-right: 11px;
  border-right: 1px solid #3f444b;
}
.gap-fields span:nth-child(2) {
  border-right: 0;
}
.gap-link {
  position: absolute;
  right: 0;
  top: 0;
  display: flex;
  align-items: center;
  justify-content: center;
  width: 27px;
  height: 25px;
  background-color: #3f444b;
}
.gap-labels {
  display: flex;
  width: 233px;
  height: 12px;
  margin-top: 4px;
  font-size: 9.5px;
  line-height: 12px;
  text-align: center;
  color: #8f949a;
}
.gap-labels span {
  flex: 1;
}
.panel-extra {
  margin-top: 40px;
  padding: 0 20px;
  border-top: 2px solid #2d2f33;
}
.panel-extra .sec-title {
  margin-top: 15px;
}
.need-help {
  display: flex;
  align-items: center;
  justify-content: center;
  gap: 6px;
  margin-top: auto;
  margin-bottom: 26px;
  font-size: 11px;
  font-weight: 700;
  height: 16px;
}

/* preview */
.preview {
  position: relative;
  flex: 1;
  min-width: 0;
  background-color: #fafafa;
}
.promo {
  position: relative;
  height: 51px;
  background-color: #e9e9e9;
  text-align: center;
  color: #fff;
  font-family: "Liberation Sans", Arial, sans-serif;
  font-size: 16px;
  line-height: 48px;
}
.promo p {
  display: flex;
  justify-content: center;
  white-space: pre-wrap;
  margin-left: -15px;
}
.promo-bag {
  margin-top: 15px;
  margin-left: 1px;
}
.promo-close {
  position: absolute;
  right: 41px;
  top: 4px;
  font-size: 16px;
  font-weight: 700;
}
.handle {
  position: absolute;
  left: 755px;
  top: 29px;
  display: flex;
  align-items: center;
  justify-content: center;
  gap: 12px;
  width: 94px;
  height: 24px;
  padding-bottom: 1px;
  background-color: #f0b6fb;
  clip-path: polygon(8px 0, 86px 0, 94px 100%, 0 100%);
  z-index: 3;
}
.site-header {
  display: flex;
  align-items: flex-start;
  height: 119px;
  border: 2px solid #f0a8ec;
  border-right-width: 1px;
  border-left-width: 1px;
  background-color: #cf5c75;
  color: #fff;
}
.site-logo {
  width: 91px;
  margin: 43px 0 0 237px;
  text-align: center;
  color: #f4dde2;
  font-family: "Liberation Serif", serif;
}
.logo-word {
  font-size: 20px;
  line-height: 20px;
  letter-spacing: 2px;
  white-space: nowrap;
}
.logo-sub {
  font-size: 4px;
  line-height: 5px;
  white-space: nowrap;
}
.site-nav {
  width: 480px;
  margin: 19px 0 0 118px;
  font-family: Lato, sans-serif;
  font-size: 17.2px;
}
.nav-row {
  display: flex;
  height: 38px;
  align-items: center;
  gap: 45px;
}
.nav-row a {
  display: flex;
  align-items: center;
  gap: 7px;
  white-space: nowrap;
}
.nav-row svg {
  width: 11px;
  height: 8px;
}
.nav-a {
  padding-left: 18px;
}
.nav-b {
  padding-left: 156px;
}
.cart {
  position: relative;
  display: flex;
  align-items: center;
  width: 125px;
  height: 40px;
  margin: 20px 0 0 76px;
  padding-left: 18px;
  border-radius: 6px;
  background-color: #f4f4f4;
  color: #1c1c1c;
}
.cart b {
  font-family: Roboto, sans-serif;
  font-size: 16px;
  margin-right: 5px;
  font-weight: 500;
}
.cart svg {
  margin-left: 14px;
  margin-top: -3px;
}
.cart span {
  font-family: "Open Sans", sans-serif;
  font-size: 15px;
  letter-spacing: 0.5px;
}
.cart-badge {
  position: absolute;
  right: 5px;
  top: -10px;
  width: 20px;
  height: 20px;
  border-radius: 50%;
  background-color: #222;
  color: #fff;
  font-size: 10px;
  font-style: normal;
  font-weight: 700;
  line-height: 20px;
  text-align: center;
}
.menu-stub {
  display: flex;
  flex-direction: column;
  gap: 4px;
  width: 29px;
  height: 75px;
  margin: 20px 0 0 -3px;
  padding: 10px 0 0 8px;
  flex: none;
  border: 1px dashed rgba(120, 40, 60, 0.25);
  background: repeating-linear-gradient(120deg, transparent 0 12px, rgba(120, 40, 60, 0.2) 12px 13px);
}
.menu-stub i {
  height: 4px;
  background-color: #bc7d8b;
}
.site-search {
  display: flex;
  width: 122px;
  height: 44px;
  margin: 36px 0 0 96px;
  border: 1px solid #d6d6d6;
  background-color: #fff;
}
.search-ico {
  display: flex;
  align-items: center;
  justify-content: center;
  width: 41px;
  flex: none;
  background-color: #eee;
  border-right: 1px solid #d6d6d6;
}
.search-text {
  margin-left: 6px;
  font-family: "Liberation Serif", serif;
  font-size: 13px;
  letter-spacing: 0.1px;
  line-height: 42px;
  color: #7d7d7d;
  white-space: nowrap;
}
.currency {
  position: absolute;
  left: 0;
  top: 105px;
  display: flex;
  flex-direction: column;
  gap: 5px;
}
.cur {
  display: flex;
  align-items: center;
  justify-content: space-between;
  width: 82px;
  height: 43px;
  padding: 0 7px 3px 11px;
  border-radius: 0 22px 22px 0;
  color: #fff;
  font-family: "Liberation Sans", Arial, sans-serif;
  font-size: 14px;
}
.cur-usd {
  background-color: #433838;
}
.cur-lkr {
  padding-left: 13px;
  background-color: #c29d8f;
}
.flag {
  display: flex;
  align-items: center;
  justify-content: center;
  width: 30px;
  height: 30px;
  border-radius: 50%;
  background-color: #fff;
  overflow: hidden;
}
.dropzone {
  display: flex;
  flex-direction: column;
  align-items: center;
  width: 1120px;
  height: 151px;
  margin: 80px auto 0;
  padding-top: 40px;
  border: 2px dashed #d5d8dc;
}
.dropzone p {
  margin-top: 14px;
  font-size: 13px;
  font-style: italic;
  color: #6d7882;
}
.drop-btns {
  display: flex;
  gap: 5px;
}
.drop-btn {
  display: flex;
  align-items: center;
  justify-content: center;
  width: 40px;
  height: 40px;
  border-radius: 50%;
  background-color: #e8e9eb;
}
.drop-btn.is-ai {
  background-color: #f2bbfb;
}

/* structure panel */
.structure {
  position: absolute;
  right: 47px;
  top: 354px;
  display: flex;
  flex-direction: column;
  width: 240px;
  height: 505px;
  border-radius: 5px;
  background-color: #1f2124;
  box-shadow: 0 2px 15px rgba(0, 0, 0, 0.15);
  font-size: 13px;
  z-index: 4;
}
.st-head {
  display: flex;
  align-items: center;
  height: 37px;
  flex: none;
  padding: 0 12px;
  border-bottom: 1px solid #33363b;
}
.st-spark {
  margin-left: 20px;
}
.st-title {
  flex: 1;
  text-align: center;
  color: #e6e8ea;
  font-weight: 500;
  padding-right: 18px;
}
.st-row {
  position: relative;
  display: flex;
  align-items: center;
  height: 30.5px;
  flex: none;
  color: #d5d8dc;
}
.st-row.is-sel {
  background-color: #33363b;
}
.st-row .tw {
  width: 10px;
  height: 10px;
  margin-right: 8px;
  color: #d5d8dc;
}
.st-row .bx {
  width: 14px;
  height: 12px;
  margin-right: 8px;
  color: #d5d8dc;
}
.d0 {
  padding-left: 13px;
}
.d1 {
  padding-left: 23px;
}
.d2 {
  padding-left: 33px;
}
.leaf {
  padding-left: 51px;
}
.leaf .bx {
  height: 14px;
}
.st-last {
  border-bottom: 1px solid #33363b;
}
.st-foot {
  margin-top: auto;
}
.st-promo {
  height: 34px;
  padding-top: 12px;
  font-size: 12px;
  font-weight: 500;
  text-align: center;
  color: #e6e8ea;
  border-bottom: 1px solid #33363b;
}
.st-promo a {
  margin-left: 2px;
  font-weight: 400;
  color: #c4126f;
}
.st-dots {
  display: flex;
  align-items: center;
  justify-content: center;
  gap: 2px;
  height: 15px;
}
.st-dots i {
  width: 2px;
  height: 2px;
  background-color: #e6e8ea;
}
.collapse {
  position: absolute;
  left: 0;
  top: 456px;
  display: flex;
  align-items: center;
  justify-content: center;
  width: 15px;
  height: 50px;
  padding-bottom: 2px;
  background-color: #1f2124;
  border-radius: 0 3px 3px 0;
}
.ink {
  position: absolute;
  left: 0;
  top: 0;
  overflow: visible;
  pointer-events: none;
  z-index: 3;
}

/* taskbar */
.taskbar {
  position: relative;
  display: flex;
  align-items: center;
  height: 30px;
  margin-top: 8px;
  flex: none;
  background: linear-gradient(90deg, #1d1f1e, #1e2120 40%, #2a2320 70%, #3a2c24);
  font-family: "Open Sans", sans-serif;
  color: #efefef;
}
.start {
  margin-left: 10px;
}
.tb-search {
  display: flex;
  align-items: center;
  width: 258px;
  height: 29px;
  margin-left: 10px;
  padding: 0 6px 0 11px;
  background-color: #343434;
  border: 1px solid #5c5c5c;
  border-bottom: 0;
}
.tb-search span {
  margin-left: 12px;
  font-size: 14px;
  color: #ddd;
}
.sparkle {
  margin-left: auto;
}
.task-apps {
  display: flex;
  margin-left: 0;
  padding-left: 0;
}
.app-ico {
  position: relative;
  display: flex;
  align-items: center;
  justify-content: center;
  width: 37px;
  height: 30px;
}
.is-run::after {
  content: "";
  position: absolute;
  left: 4px;
  right: 4px;
  bottom: 0;
  height: 2px;
  background-color: #f2c5a8;
}
.is-cur {
  background-color: #454545;
}
.is-cur::after {
  left: 0;
  right: 0;
}
.tray {
  display: flex;
  align-items: center;
  position: relative;
  margin-left: auto;
  padding-right: 24px;
}
.weather {
  margin-left: 8px;
  font-size: 13px;
  white-space: nowrap;
}
.t-chev {
  margin-left: 26px;
}
.t-ico {
  margin-left: 14px;
}
.t-cam {
  margin-left: 17px;
}
.t-bat {
  margin-left: 16px;
}
.clock {
  margin-left: 12px;
  font-size: 12px;
  white-space: nowrap;
}
.t-note {
  margin-left: 21px;
}
```
